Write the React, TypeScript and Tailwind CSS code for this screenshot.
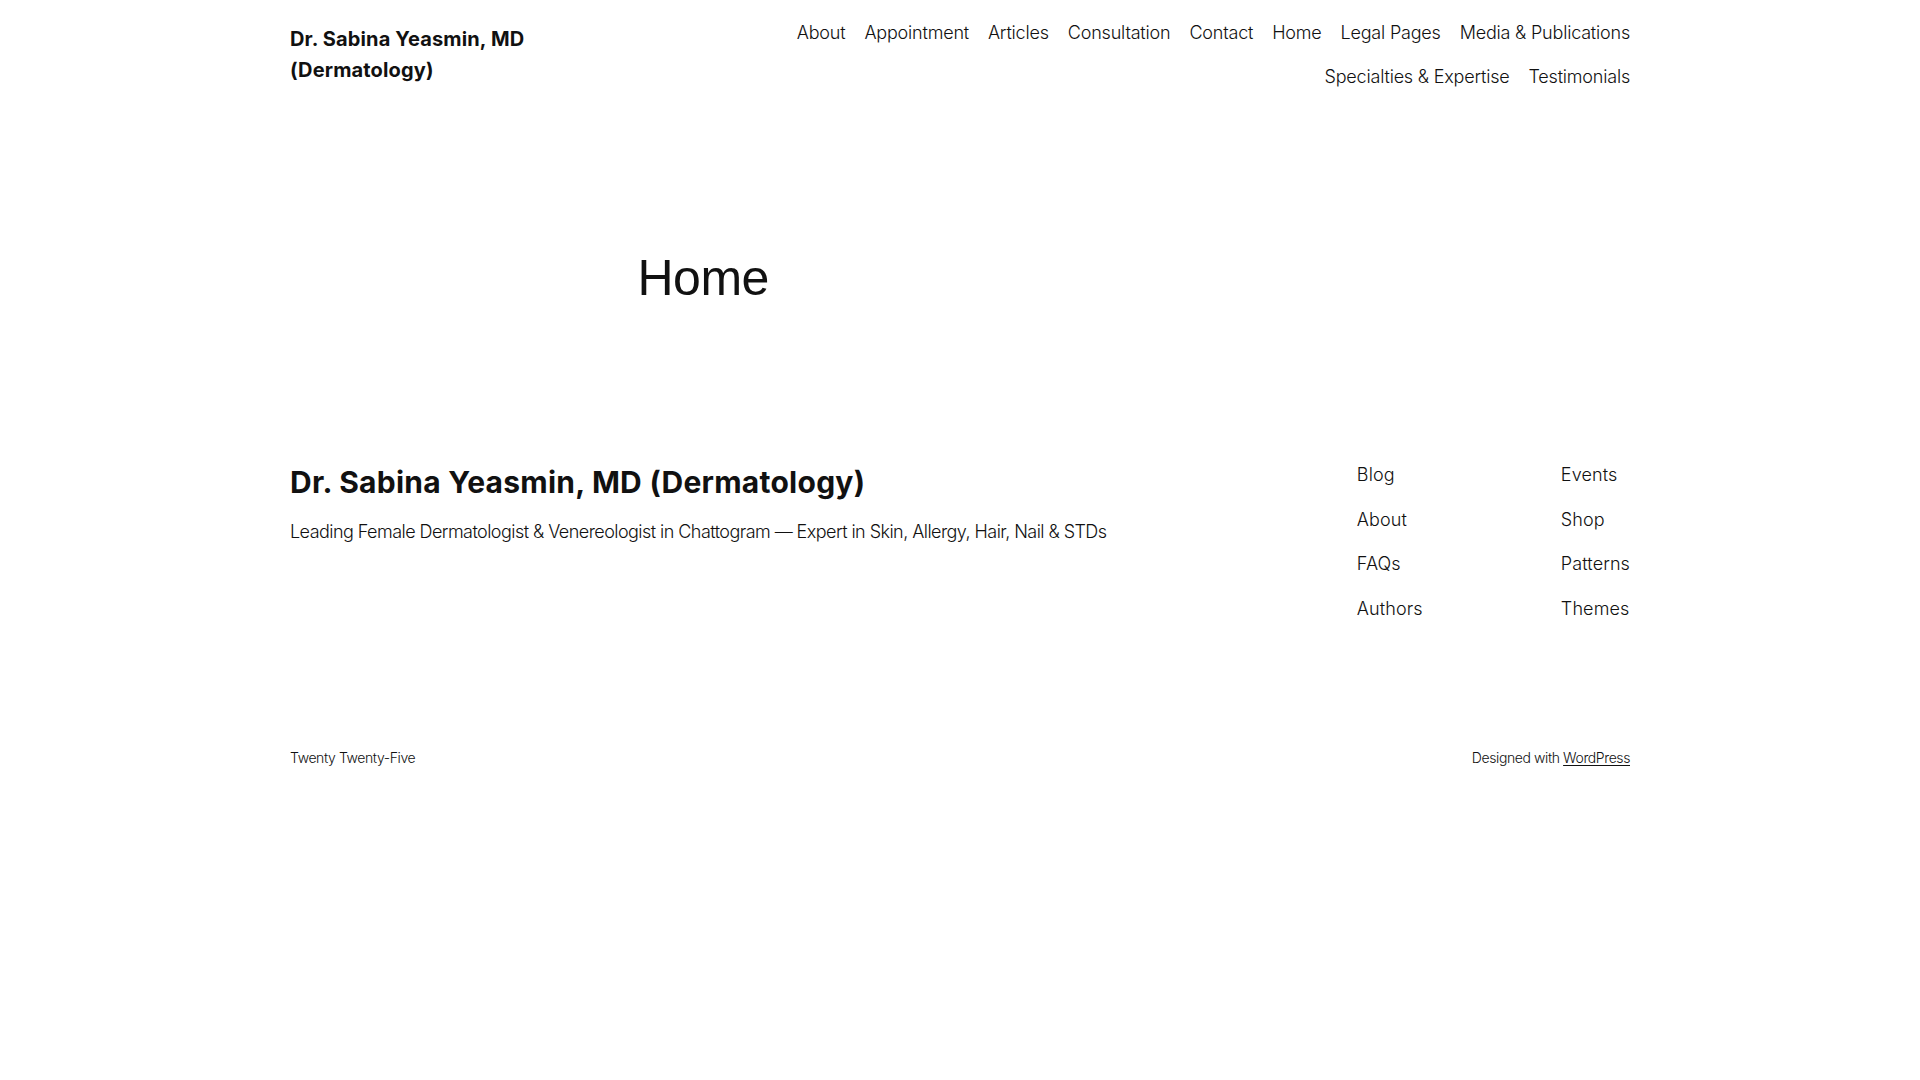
const headerLinks = [
  ["About", "Appointment", "Articles", "Consultation", "Contact", "Home", "Legal Pages", "Media & Publications"],
  ["Specialties & Expertise", "Testimonials"],
];

const footerCols = [
  ["Blog", "About", "FAQs", "Authors"],
  ["Events", "Shop", "Patterns", "Themes"],
];

const sans = "font-['Inter','Noto_Sans',sans-serif]";

export default function App() {
  return (
    <div className={`min-h-screen bg-white text-[#111111] ${sans}`}>
      <header className="mx-auto flex w-[1340px] items-center justify-between pt-[19px]">
        <a href="#" className="block text-[20px] font-bold leading-[31px] tracking-[0.15px]">
          Dr. Sabina Yeasmin, MD
          <br />
          (Dermatology)
        </a>
        <nav className="flex flex-col items-end gap-y-[17px]">
          {headerLinks.map((row, i) => (
            <ul key={i} className="flex gap-x-[19px]">
              {row.map((label) => (
                <li key={label}>
                  <a href="#" className="block text-[18px] font-light leading-[27px] tracking-[-0.2px]">
                    {label}
                  </a>
                </li>
              ))}
            </ul>
          ))}
        </nav>
      </header>

      <main className="mx-auto mt-[158px] w-[645px]">
        <h1 className="font-['Liberation_Sans','Arial',sans-serif] text-[50px] font-normal leading-[60px] tracking-[-0.5px]">
          Home
        </h1>
      </main>

      <footer className="mx-auto mt-[156px] w-[1340px]">
        <div className="flex items-start justify-between">
          <div>
            <h2 className="text-[30px] font-bold leading-[36px] tracking-[0.25px]">
              Dr. Sabina Yeasmin, MD (Dermatology)
            </h2>
            <p className="mt-[18px] text-[18px] font-light leading-[27px] tracking-[-0.55px]">
              Leading Female Dermatologist &amp; Venereologist in Chattogram — Expert in Skin, Allergy, Hair, Nail &amp; STDs
            </p>
          </div>
          <div className="-mt-[3px] flex">
            {footerCols.map((col, i) => (
              <ul key={i} className={`flex flex-col gap-y-[17.5px] ${i === 0 ? "w-[204px]" : ""}`}>
                {col.map((label) => (
                  <li key={label}>
                    <a href="#" className="block text-[18px] font-light leading-[27px] tracking-[0.1px]">
                      {label}
                    </a>
                  </li>
                ))}
              </ul>
            ))}
          </div>
        </div>

        <div className="mt-[125px] flex items-center justify-between text-[14px] font-light leading-[21px] tracking-[-0.4px]">
          <p>Twenty Twenty-Five</p>
          <p>
            Designed with{" "}
            <a href="#" className="underline underline-offset-2">
              WordPress
            </a>
          </p>
        </div>
      </footer>
    </div>
  );
}
